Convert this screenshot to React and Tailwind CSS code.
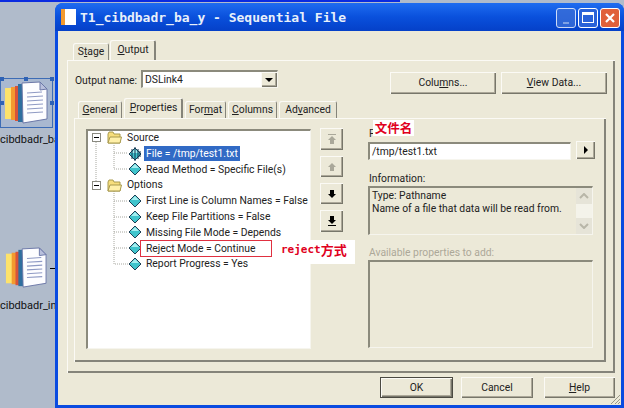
import React from 'react';

const raised = 'bg-[#ece9d8] shadow-[inset_1px_1px_0_#fbfaf5,inset_-1px_-1px_0_#77766a,inset_-2px_-2px_0_#aca899]';
const sunken = 'border-t-2 border-l-2 border-t-[#8b8a7c] border-l-[#8b8a7c] border-b border-r border-b-[#f6f5ee] border-r-[#f6f5ee]';
const panel = 'bg-[#ece9d8] shadow-[inset_1px_1px_0_#fbfaf5,inset_-2px_-2px_0_#85847a]';

const DocIcon = ({ className }) => (
    <svg viewBox="0 0 44 44" className={className}>
        <rect x="1" y="7" width="7" height="31" fill="#fde26b" />
        <rect x="7" y="6" width="5" height="33" fill="#f39a2f" />
        <rect x="11" y="5" width="5" height="35" fill="#d8533a" />
        <rect x="14" y="3" width="5" height="38" fill="#2f6f9f" />
        <path d="M18 2 L36 1 L43 8 L43 38 L19 42 Z" fill="#fdfdff" stroke="#6c78a8" strokeWidth="1" />
        <path d="M36 1 L36 9 L43 8 Z" fill="#b9c0dc" stroke="#6c78a8" strokeWidth="1" />
        <path d="M23 12 L38 11 M23 16 L39 15 M23 20 L39 19 M23 24 L39 23 M23 28 L39 27 M23 32 L39 31" stroke="#8f9ac4" strokeWidth="1.2" />
    </svg>
);

const Folder = () => (
    <svg viewBox="0 0 15 13" className="w-[15px] h-[13px] shrink-0">
        <path d="M1 3 L2 1 L6 1 L7 3 L13 3 L13 12 L1 12 Z" fill="#f7de7c" stroke="#a89a4e" />
        <path d="M1 12 L3 6 L14.5 6 L13 12 Z" fill="#fff0a8" stroke="#a89a4e" />
    </svg>
);

const Gem = ({ hatched }) => (
    <svg viewBox="0 0 14 14" className="w-[14px] h-[14px] shrink-0">
        <path d="M7 1 L13 7 L7 13 L1 7 Z" fill="#3fc4cc" stroke="#1d3f55" />
        <path d="M7 2 L11 6 L3 6 Z" fill="#a4eef0" />
        {hatched && <path d="M4 2 L4 12 M7 0 L7 14 M10 2 L10 12 M12 4 L12 10" stroke="#0d3350" strokeWidth="1" />}
    </svg>
);

const Minus = () => (
    <span className="w-[9px] h-[9px] border border-[#8a8a80] bg-white flex items-center justify-center shrink-0">
        <span className="w-[5px] h-px bg-black" />
    </span>
);

const Arrow = ({ d, dim }) => (
    <svg viewBox="0 0 12 12" className="w-[12px] h-[12px]">
        <path d={d} fill={dim ? '#aaa89a' : '#000'} />
    </svg>
);

const GroupRow = ({ label }) => (
    <div className="h-[15.75px] flex items-center pl-[4px]">
        <Minus />
        <span className="ml-[6px]"><Folder /></span>
        <span className="ml-[5px] text-[#222]">{label}</span>
    </div>
);

const LeafRow = ({ label, selected }) => (
    <div className="h-[15.75px] flex items-center pl-[40px]">
        <Gem hatched={selected} />
        <span className={`ml-[2px] px-[2px] leading-[15px] ${selected ? 'bg-[#316ac5] text-white' : 'text-[#222]'}`}>{label}</span>
    </div>
);

const TabButton = ({ label, u, active, w }) => {
    const i = label.indexOf(u);
    return (
        <div className={`${w} flex items-center justify-center rounded-t-[2px] whitespace-nowrap ${active ? 'h-[20px] bg-[#ece9d8] shadow-[inset_1px_1px_0_#fbfaf5,inset_-2px_0_0_#85847a]' : 'h-[17px] bg-[#e8e5d4] shadow-[inset_1px_1px_0_#fbfaf5,inset_-1px_0_0_#85847a]'}`}>
            <span>{label.slice(0, i)}<span className="underline">{u}</span>{label.slice(i + 1)}</span>
        </div>
    );
};

const TitleButton = ({ className, children }) => (
    <div className={`w-[20px] h-[20px] rounded-[3px] border border-white flex items-center justify-center ${className}`}>{children}</div>
);

export default function App() {
    return (
        <div className="relative w-[624px] h-[408px] overflow-hidden bg-[#b0bbcb] text-[10.35px] text-[#222] font-['Roboto',sans-serif]">
            {/* top of the window behind */}
            <div className="h-[2px] w-[400px] bg-[#0a2be0]" />

            {/* stage canvas */}
            <div className="absolute left-0 top-[78px] w-[53px] h-[50px] bg-[#a9b8d0] border border-[#3d6cb5]">
                <DocIcon className="absolute left-[3px] top-[2px] w-[44px] h-[44px]" />
                <span className="absolute -left-px -top-[2px] w-[4px] h-[4px] bg-[#2f62b5]" />
                <span className="absolute left-[23px] -top-[2px] w-[4px] h-[4px] bg-[#2f62b5]" />
                <span className="absolute -right-[2px] -top-[2px] w-[4px] h-[4px] bg-[#2f62b5]" />
                <span className="absolute -right-[2px] top-[22px] w-[4px] h-[4px] bg-[#2f62b5]" />
                <span className="absolute -left-px top-[22px] w-[4px] h-[4px] bg-[#2f62b5]" />
            </div>
            <span className="absolute left-0 top-[132px] text-[11px] text-[#111]">cibdbadr_ba</span>
            <DocIcon className="absolute left-[5px] top-[247px] w-[42px] h-[42px]" />
            <span className="absolute left-0 top-[298px] text-[11px] text-[#111]">cibdbadr_in</span>
            <div className="absolute left-[50px] top-[268px] w-[5px] h-px bg-black" />

            {/* dialog */}
            <div className="absolute left-[55px] top-[3px] w-[569px] h-[405px] flex flex-col bg-[#0a4be0] rounded-t-[8px] overflow-hidden px-[3px] pb-[3px]">
                <div className="h-[28px] -mx-[3px] shrink-0 flex items-center pl-[6px] pr-[4px] bg-gradient-to-b from-[#1f6cf0] via-[#0a50dc] to-[#0540c8]">
                    <div className="w-[15px] h-[16px] flex mr-[4px] shrink-0">
                        <span className="w-[4px] bg-[#f39a2f]" />
                        <span className="flex-1 bg-white" />
                    </div>
                    <span className="flex-1 mt-[2px] font-['DejaVu_Sans_Mono',monospace] font-bold text-[13px] text-[#e8f0fa] whitespace-nowrap">T1_cibdbadr_ba_y - Sequential File</span>
                    <div className="flex gap-[2px] mt-px">
                        <TitleButton className="bg-[#3a6fd8] opacity-80 items-end pb-[3px]">
                            <span className="w-[6px] h-[2px] bg-[#9db8ea]" />
                        </TitleButton>
                        <TitleButton className="bg-[#2a62d8]">
                            <span className="w-[12px] h-[11px] border border-white border-t-[3px]" />
                        </TitleButton>
                        <TitleButton className="bg-[#e0603a]">
                            <svg viewBox="0 0 12 12" className="w-[12px] h-[12px]"><path d="M2 2 L10 10 M10 2 L2 10" stroke="#fff" strokeWidth="2.2" /></svg>
                        </TitleButton>
                    </div>
                </div>

                <div className="flex-1 bg-[#ece9d8] pl-[9px] pt-[8px] relative">
                    <div className="flex items-end h-[21px] relative z-10">
                        <div className="w-[6px]" />
                        <TabButton label="Stage" u="t" w="w-[36px]" />
                        <div className="w-px" />
                        <TabButton label="Output" u="O" w="w-[46px]" active />
                    </div>
                    <div className={`w-[548px] h-[313px] pt-[10px] pl-[7px] ${panel}`}>
                        <div className="flex h-[24px] items-start">
                            <label className="w-[67px] mt-[3px] pl-px whitespace-nowrap">Output name:</label>
                            <div className={`w-[137px] h-[18px] bg-white flex items-center justify-between pl-[2px] ${sunken}`}>
                                <span>DSLink4</span>
                                <div className={`w-[16px] h-[15px] flex items-center justify-center ${raised}`}>
                                    <span className="border-x-[4px] border-x-transparent border-t-[4px] border-t-black" />
                                </div>
                            </div>
                            <button className={`ml-[112px] mt-[2px] w-[106px] h-[22px] ${raised}`}>Col<span>u</span><span className="underline">m</span>ns...</button>
                            <button className={`ml-[5px] mt-[2px] w-[106px] h-[22px] ${raised}`}><span className="underline">V</span>iew Data...</button>
                        </div>

                        <div className="flex items-end h-[18px] mt-[6px] pl-[4px] gap-[2px] relative z-10">
                            <TabButton label="General" u="G" w="w-[44px]" />
                            <TabButton label="Properties" u="P" w="w-[59px]" active />
                            <TabButton label="Format" u="m" w="w-[41px]" />
                            <TabButton label="Columns" u="C" w="w-[49px]" />
                            <TabButton label="Advanced" u="v" w="w-[58px]" />
                        </div>

                        <div className={`w-[532px] h-[244px] flex pt-[11px] pl-[12px] ${panel}`}>
                            {/* property tree */}
                            <div className={`w-[225px] h-[220px] bg-white relative whitespace-nowrap ${sunken}`}>
                                <svg className="absolute left-0 top-0 w-[70px] h-[150px]" viewBox="0 0 70 150">
                                    <path d="M8 11 V50 M26 14 V38 H40 M26 22 H40 M26 60 V133 H40 M26 70 H40 M26 86 H40 M26 101 H40 M26 117 H40" stroke="#a8a8a0" strokeWidth="1" strokeDasharray="1 1" fill="none" />
                                </svg>
                                <div className="relative -mt-px">
                                    <GroupRow label="Source" />
                                    <LeafRow label="File = /tmp/test1.txt" selected />
                                    <LeafRow label="Read Method = Specific File(s)" />
                                    <GroupRow label="Options" />
                                    <LeafRow label="First Line is Column Names = False" />
                                    <LeafRow label="Keep File Partitions = False" />
                                    <LeafRow label="Missing File Mode = Depends" />
                                    <LeafRow label="Reject Mode = Continue" />
                                    <LeafRow label="Report Progress = Yes" />
                                </div>
                            </div>

                            {/* move buttons */}
                            <div className="w-[23px] ml-[9px] -mt-px flex flex-col gap-[6px]">
                                <button className={`h-[22px] flex items-center justify-center ${raised}`}><Arrow dim d="M2 1 H10 V2 H2 Z M6 3 L10 7 H8 V11 H4 V7 H2 Z" /></button>
                                <button className={`h-[21px] flex items-center justify-center ${raised}`}><Arrow dim d="M6 2 L10 6 H8 V10 H4 V6 H2 Z" /></button>
                                <button className={`h-[21px] flex items-center justify-center ${raised}`}><Arrow d="M4 2 H8 V6 H10 L6 10 L2 6 H4 Z" /></button>
                                <button className={`h-[22px] flex items-center justify-center ${raised}`}><Arrow d="M4 1 H8 V5 H10 L6 9 L2 5 H4 Z M2 10 H10 V11 H2 Z" /></button>
                            </div>

                            {/* value side */}
                            <div className="ml-[25px] w-[228px] -mt-[11px] pt-[2px]">
                                <div className="h-[22px] pt-[6px] pl-px text-[#222]">F</div>
                                <div className="flex">
                                    <div className={`w-[203px] h-[18px] bg-white flex items-center pl-[2px] ${sunken}`}>/tmp/test1.txt</div>
                                    <button className={`ml-[5px] -mt-px w-[19px] h-[18px] flex items-center justify-center ${raised}`}>
                                        <span className="border-y-[4px] border-y-transparent border-l-[4px] border-l-black" />
                                    </button>
                                </div>
                                <div className="mt-[11px] h-[15px] pl-px">Information:</div>
                                <div className={`w-[225px] h-[49px] flex ${sunken}`}>
                                    <div className="flex-1 pl-[2px] pt-px leading-[13px] whitespace-nowrap">
                                        <div>Type: Pathname</div>
                                        <div>Name of a file that data will be read from.</div>
                                    </div>
                                    <div className="w-[16px] flex flex-col justify-between bg-[#f4f3ea]">
                                        <div className="h-[16px] flex items-center justify-center bg-[#e6e4d8]">
                                            <svg viewBox="0 0 10 6" className="w-[10px] h-[6px]"><path d="M1 5 L5 1 L9 5" stroke="#b8b6a8" strokeWidth="2" fill="none" /></svg>
                                        </div>
                                        <div className="h-[16px] flex items-center justify-center bg-[#e6e4d8]">
                                            <svg viewBox="0 0 10 6" className="w-[10px] h-[6px]"><path d="M1 1 L5 5 L9 1" stroke="#b8b6a8" strokeWidth="2" fill="none" /></svg>
                                        </div>
                                    </div>
                                </div>
                                <div className="mt-[10px] h-[15px] pl-px text-[#aca899]">Available properties to add:</div>
                                <div className={`w-[225px] h-[88px] ${sunken}`} />
                            </div>
                        </div>
                    </div>

                    <div className="flex mt-[4px] ml-[313px]">
                        <button className={`w-[73px] h-[21px] border border-[#4b4a42] ${raised}`}>OK</button>
                        <button className={`ml-[8px] w-[72px] h-[21px] ${raised}`}>Cancel</button>
                        <button className={`ml-[11px] w-[71px] h-[21px] ${raised}`}><span className="underline">H</span>elp</button>
                    </div>

                    {/* size grip */}
                    <svg viewBox="0 0 12 12" className="absolute right-0 bottom-0 w-[12px] h-[12px]">
                        <path d="M11 2 L2 11 M11 6 L6 11 M11 9 L9 11" stroke="#9a9888" strokeWidth="1" fill="none" />
                    </svg>
                </div>
            </div>

            {/* red annotations pasted over the screenshot */}
            <div className="absolute left-[140px] top-[240px] w-[132px] h-[17px] border border-[#e03040]" />
            <div className="absolute left-[273px] top-[240px] w-[82px] h-[24px] bg-white flex items-center pl-[8px] pb-[4px] font-bold text-[#e00020] whitespace-nowrap">
                <span className="font-['DejaVu_Sans_Mono',monospace] text-[11px]">reject</span>
                <span className="font-['Noto_Sans_CJK_SC',sans-serif] text-[13px]">方式</span>
            </div>
            <div className="absolute left-[373px] top-[120px] w-[41px] h-[16px] bg-white flex items-center justify-center font-['Noto_Sans_CJK_SC',sans-serif] font-bold text-[12.5px] text-[#e00020] whitespace-nowrap">文件名</div>
        </div>
    );
}
